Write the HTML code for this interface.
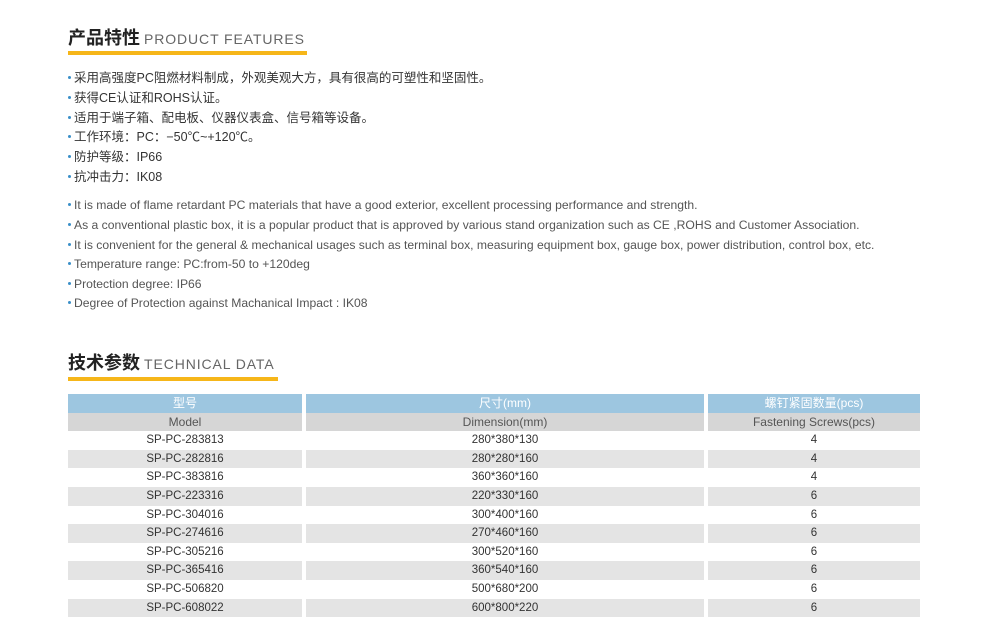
<!DOCTYPE html>
<html><head><meta charset="utf-8"><style>
body{margin:0;width:983px;height:643px;background:#fff;position:relative;overflow:hidden;font-family:"Liberation Sans","Noto Sans CJK SC",sans-serif}
.h{position:absolute;left:68px;white-space:nowrap}
.h b{font-size:18px;color:#222;font-family:"Noto Sans CJK SC",sans-serif;font-weight:700}
.h span{font-size:14px;color:#666;letter-spacing:0.9px;margin-left:4px}
.bar{position:absolute;left:68px;height:4px;background:#f6b619}
.l{position:absolute;left:68px;white-space:nowrap;color:#333;font-size:12.5px;line-height:16px}
.l i{display:inline-block;width:3px;height:3px;background:#3a8fc8;border-radius:50%;vertical-align:middle;margin-right:3px;margin-top:-2px}
.e{color:#555;font-size:12.15px;letter-spacing:0}
.r{position:absolute;left:68px;width:852px;height:18.6px;font-size:11.5px;color:#333;line-height:18.6px}
.r div{position:absolute;top:0;height:100%;text-align:center}
.c1{left:0;width:234px}.c2{left:238px;width:398px}.c3{left:640px;width:212px}
.g div{background:#e4e4e4}
.b div{background:#9dc6e0;color:#fff;font-size:12px}
.m div{background:#d6d6d6;color:#555;font-size:12px}
</style></head><body>
<div class="h" style="top:24px"><b>产品特性</b><span>PRODUCT FEATURES</span></div>
<div class="bar" style="top:51px;width:239px"></div>
<div class="l" style="top:70px"><i></i>采用高强度PC阻燃材料制成，外观美观大方，具有很高的可塑性和坚固性。</div>
<div class="l" style="top:90px"><i></i>获得CE认证和ROHS认证。</div>
<div class="l" style="top:110px"><i></i>适用于端子箱、配电板、仪器仪表盒、信号箱等设备。</div>
<div class="l" style="top:129px"><i></i>工作环境：PC：−50℃~+120℃。</div>
<div class="l" style="top:149px"><i></i>防护等级：IP66</div>
<div class="l" style="top:169px"><i></i>抗冲击力：IK08</div>
<div class="l e" style="top:197px"><i></i>It is made of flame retardant PC materials that have a good exterior, excellent processing performance and strength.</div>
<div class="l e" style="top:217px"><i></i>As a conventional plastic box, it is a popular product that is approved by various stand organization such as CE ,ROHS and Customer Association.</div>
<div class="l e" style="top:237px"><i></i>It is convenient for the general &amp; mechanical usages such as terminal box, measuring equipment box, gauge box, power distribution, control box, etc.</div>
<div class="l e" style="top:256px"><i></i>Temperature range: PC:from-50 to +120deg</div>
<div class="l e" style="top:276px"><i></i>Protection degree: IP66</div>
<div class="l e" style="top:295px"><i></i>Degree of Protection against Machanical Impact : IK08</div>
<div class="h" style="top:349px"><b>技术参数</b><span>TECHNICAL DATA</span></div>
<div class="bar" style="top:377px;width:210px"></div>
<div class="r b" style="top:394px"><div class="c1">型号</div><div class="c2">尺寸(mm)</div><div class="c3">螺钉紧固数量(pcs)</div></div>
<div class="r m" style="top:412.6px"><div class="c1">Model</div><div class="c2">Dimension(mm)</div><div class="c3">Fastening Screws(pcs)</div></div>
<div class="r" style="top:431.2px"><div class="c1">SP-PC-283813</div><div class="c2">280*380*130</div><div class="c3">4</div></div>
<div class="r g" style="top:449.8px"><div class="c1">SP-PC-282816</div><div class="c2">280*280*160</div><div class="c3">4</div></div>
<div class="r" style="top:468.4px"><div class="c1">SP-PC-383816</div><div class="c2">360*360*160</div><div class="c3">4</div></div>
<div class="r g" style="top:487px"><div class="c1">SP-PC-223316</div><div class="c2">220*330*160</div><div class="c3">6</div></div>
<div class="r" style="top:505.6px"><div class="c1">SP-PC-304016</div><div class="c2">300*400*160</div><div class="c3">6</div></div>
<div class="r g" style="top:524.2px"><div class="c1">SP-PC-274616</div><div class="c2">270*460*160</div><div class="c3">6</div></div>
<div class="r" style="top:542.8px"><div class="c1">SP-PC-305216</div><div class="c2">300*520*160</div><div class="c3">6</div></div>
<div class="r g" style="top:561.4px"><div class="c1">SP-PC-365416</div><div class="c2">360*540*160</div><div class="c3">6</div></div>
<div class="r" style="top:580px"><div class="c1">SP-PC-506820</div><div class="c2">500*680*200</div><div class="c3">6</div></div>
<div class="r g" style="top:598.6px"><div class="c1">SP-PC-608022</div><div class="c2">600*800*220</div><div class="c3">6</div></div>
</body></html>
